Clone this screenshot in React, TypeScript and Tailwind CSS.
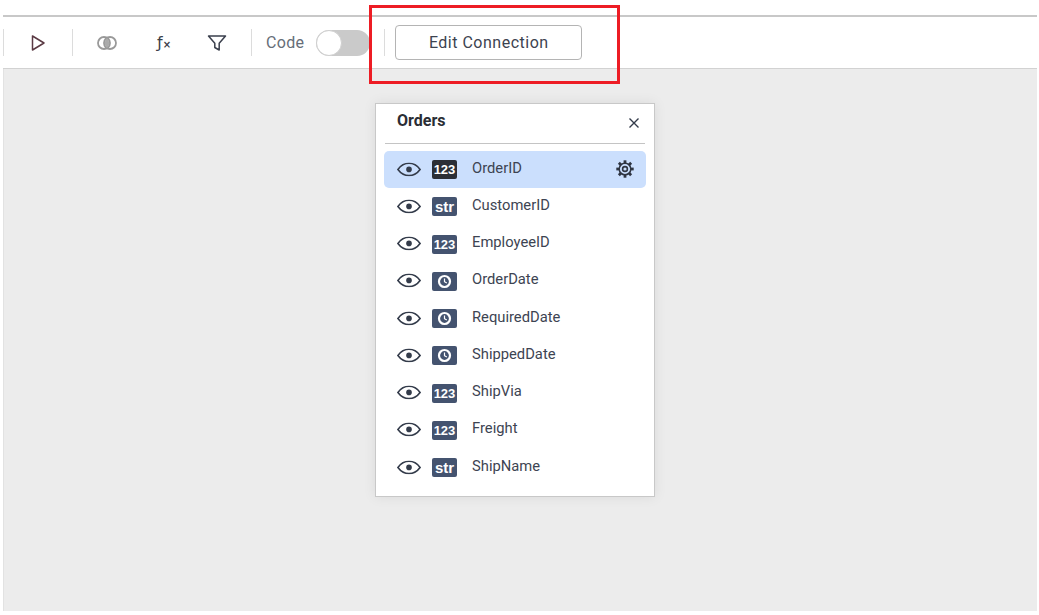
import React from "react";

const fields: [string, "num" | "str" | "date"][] = [
  ["OrderID", "num"],
  ["CustomerID", "str"],
  ["EmployeeID", "num"],
  ["OrderDate", "date"],
  ["RequiredDate", "date"],
  ["ShippedDate", "date"],
  ["ShipVia", "num"],
  ["Freight", "num"],
  ["ShipName", "str"],
];

function Eye() {
  return (
    <svg width="24" height="14" viewBox="0 0 24 14" fill="none">
      <path d="M0.900 7C4 2.800 7.500 0.900 12 0.900s8 1.900 11.100 6.100C20 11.200 16.500 13.100 12 13.100S4 11.200 0.900 7Z" stroke="#333b4a" strokeWidth="1.600" strokeLinejoin="miter" />
      <circle cx="12" cy="7" r="2.800" fill="#333b4a" />
    </svg>
  );
}

function Gear() {
  const teeth = [0, 45, 90, 135, 180, 225, 270, 315];
  return (
    <svg width="18" height="18" viewBox="0 0 18 18" fill="none">
      {teeth.map((a) => (
        <rect key={a} x="7.600" y="0.300" width="2.800" height="3.500" fill="#2f3542" transform={`rotate(${a} 9 9)`} />
      ))}
      <circle cx="9" cy="9" r="5.800" stroke="#2f3542" strokeWidth="1.500" fill="none" />
      <circle cx="9" cy="9" r="2.400" stroke="#2f3542" strokeWidth="1.600" fill="none" />
    </svg>
  );
}

function TypeBadge({ kind, active }: { kind: "num" | "str" | "date"; active: boolean }) {
  return (
    <span
      className={`flex h-[19px] w-[25px] items-center justify-center rounded-[2px] font-['Liberation_Sans',sans-serif] font-bold leading-none text-white ${
        active ? "bg-[#2c2f36]" : "bg-[#44536f]"
      } ${kind === "str" ? "text-[15px]" : "text-[13px]"}`}
    >
      {kind === "num" && "123"}
      {kind === "str" && "str"}
      {kind === "date" && (
        <svg width="15" height="15" viewBox="0 0 15 15" fill="none">
          <circle cx="7.500" cy="7.500" r="5.500" stroke="#fff" strokeWidth="2.200" />
          <path d="M7.500 4.500v3.200l2.300 1.300" stroke="#fff" strokeWidth="1.200" />
        </svg>
      )}
    </span>
  );
}

function Sep() {
  return <span className="block h-[27px] w-px shrink-0 bg-[#dcdcdc]" />;
}

export default function App() {
  return (
    <div className="relative h-[615px] w-[1039px] overflow-hidden bg-white pl-[3px] pr-[2px] pt-[15px] pb-[4px] font-['Roboto',sans-serif]">
      <div className="flex h-full flex-col">
        <div className="flex h-[54px] shrink-0 items-center border-t-2 border-b border-t-[#c8c8c8] border-b-[#d2d2d2] bg-white">
          <Sep />
          <div className="flex w-[68px] justify-center">
            <svg width="16" height="18" viewBox="0 0 16 18" fill="none">
              <path d="M2.500 2v14L14 9 2.500 2Z" stroke="#5b3a44" strokeWidth="1.500" strokeLinejoin="round" />
            </svg>
          </div>
          <Sep />
          <div className="ml-6 w-[20px]">
            <svg width="20" height="14" viewBox="0 0 20 14" fill="none">
              <circle cx="7" cy="7" r="6" stroke="#999" strokeWidth="1.800" />
              <circle cx="13" cy="7" r="6" stroke="#999" strokeWidth="1.800" />
              <path d="M10 2a6.500 6.500 0 0 1 0 10 6.500 6.500 0 0 1 0-10Z" fill="#aaa" />
            </svg>
          </div>
          <span className="ml-[40px] flex w-[16px] items-baseline font-['DejaVu_Sans',sans-serif] text-[16px] leading-none text-[#3b3f4a]">
            ƒ<span className="font-bold text-[10px]">×</span>
          </span>
          <div className="ml-[34px] w-[20px]">
            <svg width="20" height="18" viewBox="0 0 20 18" fill="none">
              <path d="M1.500 2h17l-6.300 7.200V16l-4.400-2.500V9.200L1.500 2Z" stroke="#3a3f4c" strokeWidth="1.500" strokeLinejoin="round" />
            </svg>
          </div>
          <span className="ml-[24px]"><Sep /></span>
          <span className="ml-[14px] text-[16px] leading-none tracking-[0.3px] text-[#666e78]">Code</span>
          <span className="ml-[12px] flex h-[26px] w-[54px] items-center rounded-full bg-[#cacaca]">
            <span className="h-[26px] w-[26px] rounded-full border border-[#cfcfcf] bg-white" />
          </span>
          <span className="ml-[14px]"><Sep /></span>
          <button className="ml-[10px] flex h-[35px] w-[187px] items-center justify-center rounded-[4px] border border-[#b4b4b4] bg-white text-[16px] tracking-[0.5px] text-[#3c4350]">
            Edit Connection
          </button>
        </div>

        <div className="flex-1 border-l border-l-[#e2e2e2] bg-[#ececec] pl-[371px] pt-[34px]">
          <div className="flex h-[394px] w-[280px] flex-col border border-[#c8c8c8] bg-white px-[8px] shadow-[0_0_12px_rgba(0,0,0,0.08)]">
            <div className="mx-px flex h-[40px] shrink-0 items-start justify-between border-b border-b-[#c4c4c4] pl-[12px] pr-[5px] pt-[7px]">
              <span className="text-[16px] font-bold leading-[19px] text-[#2a2d34]">Orders</span>
              <svg className="mt-[6px]" width="12" height="12" viewBox="0 0 12 12" fill="none">
                <path d="M1.500 1.500l9 9M10.500 1.500l-9 9" stroke="#333b4a" strokeWidth="1.400" />
              </svg>
            </div>
            <div className="mt-[7px] flex flex-col">
              {fields.map(([name, kind], i) => (
                <div
                  key={name}
                  className={`flex h-[37.25px] items-center rounded-[5px] pl-[13px] pr-[12px] ${i === 0 ? "bg-[#cbdffd]" : ""}`}
                >
                  <span className="translate-y-[-0.6px]"><Eye /></span>
                  <span className="ml-[11px]"><TypeBadge kind={kind} active={i === 0} /></span>
                  <span className="ml-[15px] translate-y-[-2px] text-[14.750px] text-[#3d4452]">{name}</span>
                  {i === 0 && <span className="ml-auto -translate-y-px"><Gear /></span>}
                </div>
              ))}
            </div>
          </div>
        </div>
      </div>
      <div className="pointer-events-none absolute left-[369px] top-[5px] h-[79px] w-[251px] border-[3px] border-[#ed1c24]" />
    </div>
  );
}
